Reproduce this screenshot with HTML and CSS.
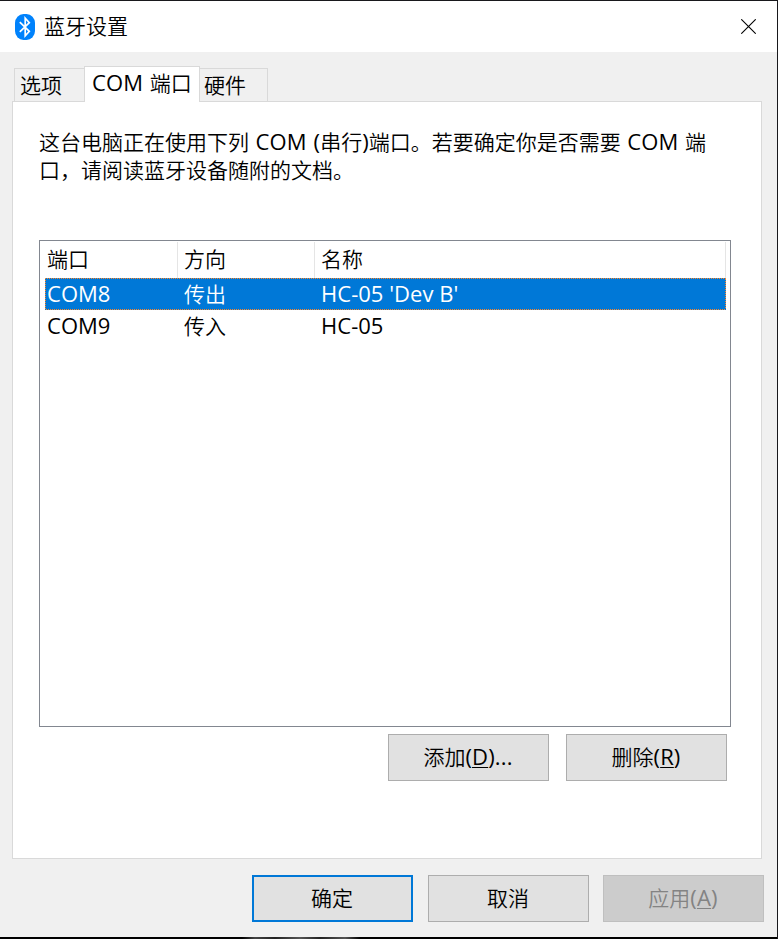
FILE: index.html
```html
<!DOCTYPE html>
<html lang="zh-CN">
<head>
<meta charset="utf-8">
<title>蓝牙设置</title>
<link rel="stylesheet" href="styles.css">
</head>
<body>
<main class="window">
  <header class="titlebar">
    <svg class="bluetooth" width="20" height="26" viewBox="0 0 20 26">
      <rect width="20" height="26" rx="8.500" ry="9" fill="#0082fc"/>
      <path d="M4.800 8.200 14.300 17.300 10.200 21.800V4.200l4.100 4.500L4.800 17.800" fill="none" stroke="#fff" stroke-width="1.700"/>
    </svg>
    <h1 class="title">蓝牙设置</h1>
    <svg class="close" width="15" height="15" viewBox="0 0 15 15">
      <path d="M.3.3 14.700 14.700M14.700.3.3 14.700" stroke="#000" stroke-width="1.100"/>
    </svg>
  </header>
  <section class="body">
    <nav class="tabs">
      <span class="tab tab-options">选项</span>
      <span class="tab tab-active"><span class="latin">COM</span> 端口</span>
      <span class="tab tab-hardware">硬件</span>
    </nav>
    <div class="panel">
      <p class="intro">这台电脑正在使用下列 <span class="latin">COM (</span>串行<span class="latin">)</span>端口。若要确定你是否需要 <span class="latin">COM</span> 端<br>口，请阅读蓝牙设备随附的文档。</p>
      <div class="list">
        <div class="row head"><span>端口</span><span>方向</span><span>名称</span></div>
        <div class="row selected"><span class="latin">COM8</span><span>传出</span><span class="latin">HC-05 'Dev B'</span></div>
        <div class="row"><span class="latin">COM9</span><span>传入</span><span class="latin">HC-05</span></div>
      </div>
      <div class="actions">
        <button class="button">添加<span class="latin">(<u>D</u>)...</span></button>
        <button class="button">删除<span class="latin">(<u>R</u>)</span></button>
      </div>
    </div>
    <footer class="footer">
      <button class="button primary">确定</button>
      <button class="button">取消</button>
      <button class="button disabled" disabled>应用<span class="latin">(<u>A</u>)</span></button>
    </footer>
  </section>
  <div class="edge"></div>
</main>
</body>
</html>
```
FILE: styles.css
```css
* { box-sizing: border-box; }
body {
  margin: 0;
  font: 350 21px/28px "Open Sans", "Noto Sans CJK SC", sans-serif;
  color: #000;
}
.latin {
  font-size: 22px;
  font-weight: 400;
  letter-spacing: .15px;
}
.intro .latin,
.tab .latin,
.button .latin { line-height: 1; }
.window {
  width: 778px;
  height: 939px;
  display: flex;
  flex-direction: column;
  border-top: 1px solid #18181c;
  border-right: 1px solid #18181c;
  background: #f0f0f0;
  overflow: hidden;
}
.titlebar {
  height: 51px;
  flex: none;
  display: flex;
  align-items: center;
  padding: 0 21px 0 15px;
  background: #fff;
}
.title {
  margin: 0 auto 0 9px;
  padding-bottom: 2px;
  font-size: 21px;
  font-weight: 350;
}
.body {
  flex: 1;
  display: flex;
  flex-direction: column;
  padding: 14px 13px 0 12px;
}
.tabs {
  display: flex;
  align-items: flex-end;
  height: 35px;
  padding-left: 2px;
}
.tab {
  height: 33px;
  border: 1px solid #d9d9d9;
  border-bottom: 0;
  padding: 2px 0 0 5px;
  white-space: nowrap;
}
.tab-options { width: 70px; border-right: 0; }
.tab-active {
  width: 116px;
  height: 36px;
  margin-bottom: -1px;
  padding: 2px 0 0 7px;
  background: #fff;
  word-spacing: 1px;
  z-index: 1;
}
.tab-hardware { width: 68px; border-left: 0; padding-left: 4px; }
.panel {
  height: 758px;
  width: 750px;
  border: 1px solid #d9d9d9;
  background: #fff;
  padding: 26px 30px 0 26px;
}
.intro {
  margin: 0;
  height: 112px;
  word-spacing: 1px;
  white-space: nowrap;
}
.list {
  height: 487px;
  border: 1px solid #828790;
  padding: 1px 4px 0 5px;
}
.row {
  display: grid;
  grid-template-columns: 133px 137px 1fr;
  height: 32px;
  line-height: 32px;
}
.row span { padding-left: 6px; }
.row span:first-child { padding-left: 2px; }
.row .latin { line-height: 30px; letter-spacing: .03px; }
.head { height: 36px; line-height: 35px; }
.head span { border-right: 1px solid #e5e5e5; }
.selected {
  color: #fff;
  background:
    repeating-linear-gradient(90deg, #ff8728 0 1px, #0078d7 1px 2px) top / 100% 1px no-repeat,
    repeating-linear-gradient(90deg, #0078d7 0 1px, #ff8728 1px 2px) bottom / 100% 1px no-repeat,
    repeating-linear-gradient(#ff8728 0 1px, #0078d7 1px 2px) left / 1px 100% no-repeat,
    repeating-linear-gradient(#0078d7 0 1px, #ff8728 1px 2px) right / 1px 100% no-repeat,
    #0078d7;
}
.actions {
  display: flex;
  justify-content: flex-end;
  gap: 17px;
  padding: 7px 4px 0 0;
}
.button {
  width: 161px;
  height: 47px;
  border: 1px solid #adadad;
  border-radius: 0;
  padding: 0 1px 2px 0;
  background: #e1e1e1;
  color: #000;
  font: inherit;
}
.button u {
  text-decoration-thickness: 1px;
  text-underline-offset: 2px;
}
.primary { border: 2px solid #0078d7; margin-right: 1px; }
.disabled { background: #ccc; border-color: #bfbfbf; color: #838383; }
.footer {
  display: flex;
  justify-content: flex-end;
  gap: 14px;
  padding-top: 16px;
}
.edge {
  height: 2px;
  flex: none;
  background: linear-gradient(90deg, #000 242px, #444 255px, #222 275px, #555 300px, #222 320px, #555 345px, #000 360px);
}
```
